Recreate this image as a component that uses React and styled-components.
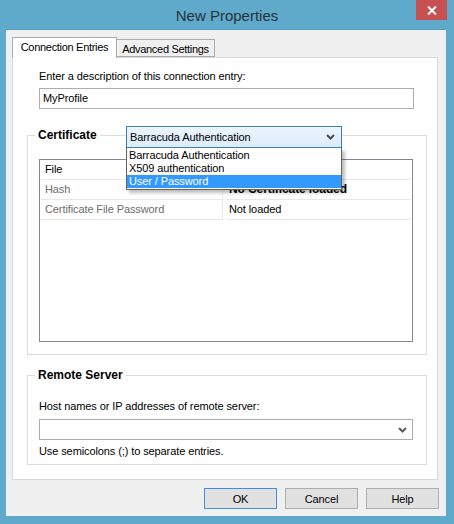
import styled, { createGlobalStyle } from "styled-components";

const GlobalStyle = createGlobalStyle`
  html, body {
    margin: 0;
    padding: 0;
    background: #5fa9ca;
  }
  body {
    font-family: "Liberation Sans", Arial, sans-serif;
    font-size: 11px;
    letter-spacing: -0.1px;
    color: #000;
  }
`;

const Chevron = ({ color = "#5a5a5a" }) => (
  <svg width="9" height="6" viewBox="0 0 9 6">
    <polyline points="1,1 4.5,4.5 8,1" fill="none" stroke={color} strokeWidth="2" />
  </svg>
);

const rows = [
  { name: "File", value: "", muted: false },
  { name: "Hash", value: "No Certificate loaded", muted: true, bold: true },
  { name: "Certificate File Password", value: "Not loaded", muted: true },
];

const authOptions = ["Barracuda Authentication", "X509 authentication", "User / Password"];

const App = () => {
  return (
    <Window>
      <GlobalStyle />
      <TitleBar>
        <Title>New Properties</Title>
        <CloseButton>
          <svg width="10" height="9" viewBox="0 0 10 9">
            <path d="M1 0.5 L9 8.5 M9 0.5 L1 8.5" stroke="#fff" strokeWidth="2" />
          </svg>
        </CloseButton>
      </TitleBar>
      <Client>
        <TabStrip>
          <Tab $active $width={105}>Connection Entries</Tab>
          <Tab $width={99}>Advanced Settings</Tab>
        </TabStrip>
        <Panel>
          <Description>
            <Label>Enter a description of this connection entry:</Label>
            <TextBox>MyProfile</TextBox>
          </Description>

          <Group $height={220}>
            <GroupTitle>Certificate</GroupTitle>
            <ComboOverlay>
              <FocusedCombo>
                <span>Barracuda Authentication</span>
                <Chevron color="#4a4a4a" />
              </FocusedCombo>
              <DropList>
                {authOptions.map((opt, i) => (
                  <DropItem key={opt} $selected={i === authOptions.length - 1}>
                    {opt}
                  </DropItem>
                ))}
              </DropList>
            </ComboOverlay>
            <PropTable>
              {rows.map((r) => (
                <PropRow key={r.name}>
                  <PropName $muted={r.muted}>{r.name}</PropName>
                  <PropValue $bold={r.bold}>{r.value}</PropValue>
                </PropRow>
              ))}
            </PropTable>
          </Group>

          <Group $height={90} $spaced>
            <GroupTitle>Remote Server</GroupTitle>
            <RemoteBody>
              <Label>Host names or IP addresses of remote server:</Label>
              <Combo>
                <span />
                <Chevron />
              </Combo>
              <Hint>Use semicolons (;) to separate entries.</Hint>
            </RemoteBody>
          </Group>
        </Panel>
        <ButtonRow>
          <Button $default>OK</Button>
          <Button>Cancel</Button>
          <Button>Help</Button>
        </ButtonRow>
      </Client>
    </Window>
  );
};

const Window = styled.div`
  width: 454px;
  height: 524px;
  background: #5fa9ca;
  display: flex;
  flex-direction: column;
`;

const TitleBar = styled.div`
  position: relative;
  height: 29px;
  display: flex;
  align-items: center;
  justify-content: center;
`;

const Title = styled.div`
  font-size: 15px;
  letter-spacing: 0;
  color: #26323b;
  padding-top: 1px;
`;

const CloseButton = styled.div`
  position: absolute;
  right: 7px;
  top: 0;
  width: 31px;
  height: 20px;
  background: #c75050;
  display: flex;
  align-items: center;
  justify-content: center;
`;

const Client = styled.div`
  margin: 0 8px 0 6px;
  height: 487px;
  background: #f0f0f0;
  border-top: 1px solid #519cbd;
  box-sizing: border-box;
  padding: 7px 7px 0 6px;
  display: flex;
  flex-direction: column;
`;

const TabStrip = styled.div`
  display: flex;
  align-items: flex-end;
  height: 20px;
  position: relative;
  z-index: 1;
`;

const Tab = styled.div`
  box-sizing: border-box;
  width: ${(p) => p.$width}px;
  height: ${(p) => (p.$active ? "21px" : "18px")};
  margin-bottom: ${(p) => (p.$active ? "-1px" : "0")};
  padding-top: 3px;
  text-align: center;
  border: 1px solid #acacac;
  border-bottom: ${(p) => (p.$active ? "none" : "1px solid #acacac")};
  background: ${(p) => (p.$active ? "#fff" : "#f0f0f0")};
  margin-left: ${(p) => (p.$active ? "0" : "-1px")};
  font-size: 11px;
  letter-spacing: -0.3px;
  white-space: nowrap;
`;

const Panel = styled.div`
  box-sizing: border-box;
  width: 426px;
  height: 423px;
  background: #fff;
  border: 1px solid #d9d9d9;
  padding: 12px 10px 0 14px;
  display: flex;
  flex-direction: column;
`;

const Description = styled.div`
  padding: 0 13px 0 12px;
  display: flex;
  flex-direction: column;
  gap: 5px;
`;

const Label = styled.div`
  line-height: 13px;
  height: 13px;
`;

const TextBox = styled.div`
  box-sizing: border-box;
  height: 21px;
  border: 1px solid #abadb3;
  padding: 3px 3px 0 3px;
  line-height: 13px;
`;

const Group = styled.div`
  position: relative;
  box-sizing: border-box;
  height: ${(p) => p.$height}px;
  margin-top: ${(p) => (p.$spaced ? "20px" : "26px")};
  border: 1px solid #dcdcdc;
  padding: 0 13px 0 11px;
`;

const GroupTitle = styled.div`
  position: absolute;
  top: -8px;
  left: 7px;
  padding: 0 3px;
  background: #fff;
  font-weight: bold;
  font-size: 12px;
  letter-spacing: 0;
  line-height: 15px;
`;

const ComboOverlay = styled.div`
  position: absolute;
  top: -10px;
  left: 98px;
  width: 216px;
  z-index: 2;
`;

const FocusedCombo = styled.div`
  box-sizing: border-box;
  height: 22px;
  border: 1px solid #3c7fb1;
  background: linear-gradient(#ecf4fc, #dcecfc);
  display: flex;
  align-items: center;
  justify-content: space-between;
  padding: 0 6px 0 3px;
`;

const DropList = styled.div`
  box-sizing: border-box;
  border: 1px solid #646464;
  border-top: none;
  background: #fff;
  padding: 1px 0 1px;
  box-shadow: 3px 3px 3px rgba(0, 0, 0, 0.25);
`;

const DropItem = styled.div`
  height: 13px;
  line-height: 13px;
  padding-left: 2px;
  background: ${(p) => (p.$selected ? "#3399ff" : "transparent")};
  color: ${(p) => (p.$selected ? "#fff" : "#000")};
`;

const PropTable = styled.div`
  box-sizing: border-box;
  margin-top: 23px;
  height: 183px;
  border: 1px solid #828790;
  padding: 0 1px;
`;

const PropRow = styled.div`
  display: grid;
  grid-template-columns: 182px 1fr;
  column-gap: 3px;
  height: 20px;
`;

const PropName = styled.div`
  border-bottom: 1px solid #e8e8e8;
  border-right: 1px solid #e8e8e8;
  padding-left: 4px;
  line-height: 19px;
  color: ${(p) => (p.$muted ? "#6d6d6d" : "#000")};
  white-space: nowrap;
`;

const PropValue = styled.div`
  border-bottom: 1px solid #e8e8e8;
  padding-left: 3px;
  line-height: 19px;
  font-weight: ${(p) => (p.$bold ? "bold" : "normal")};
  font-size: ${(p) => (p.$bold ? "12px" : "11px")};
  white-space: nowrap;
`;

const RemoteBody = styled.div`
  padding-top: 24px;
  display: flex;
  flex-direction: column;
`;

const Combo = styled.div`
  box-sizing: border-box;
  margin-top: 6px;
  height: 21px;
  border: 1px solid #acacac;
  background: #fff;
  display: flex;
  align-items: center;
  justify-content: space-between;
  padding: 0 5px 0 3px;
`;

const Hint = styled.div`
  margin-top: 5px;
  line-height: 13px;
`;

const ButtonRow = styled.div`
  display: flex;
  justify-content: flex-end;
  gap: 8px;
  margin-top: 8px;
`;

const Button = styled.div`
  box-sizing: border-box;
  width: 73px;
  height: 21px;
  border: 1px solid ${(p) => (p.$default ? "#3c8ee6" : "#adadad")};
  background: #e1e1e1;
  display: flex;
  align-items: center;
  justify-content: center;
  font-size: 11px;
`;

export default App;
